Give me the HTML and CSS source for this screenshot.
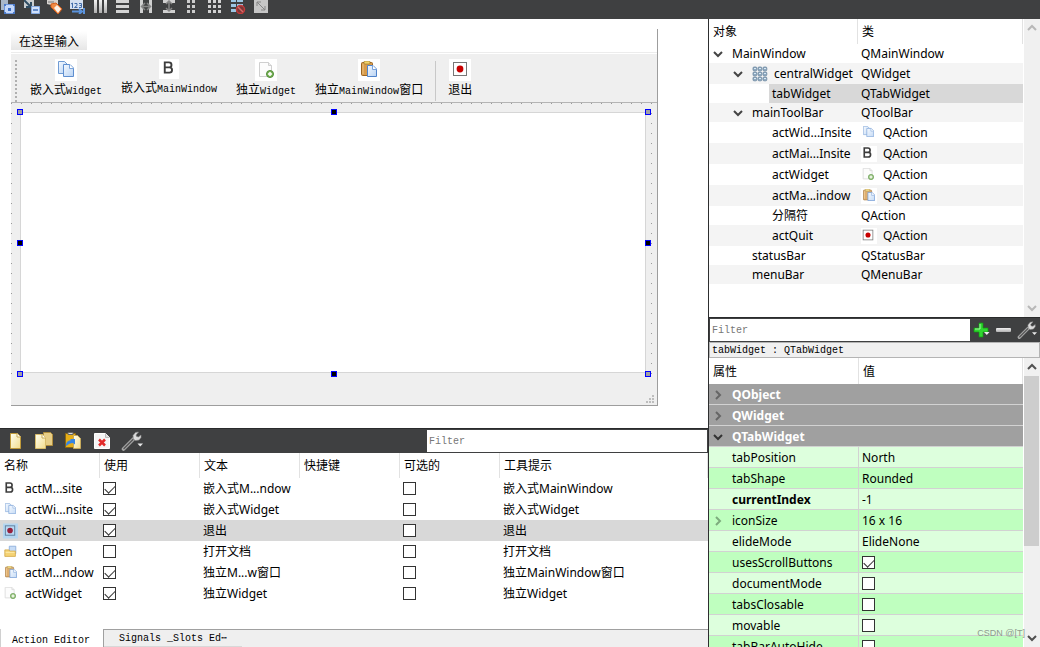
FILE: index.html
```html
<!DOCTYPE html>
<html lang="zh-CN">
<head>
<meta charset="utf-8">
<title>Qt Designer</title>
<link rel="stylesheet" href="styles.css">
</head>
<body>
<svg class="defs" aria-hidden="true">
  <defs>
    <linearGradient id="g-paper" x1="0" y1="0" x2="1" y2="1"><stop offset="0" stop-color="#fffff0"/><stop offset="1" stop-color="#f3dc8c"/></linearGradient>
    <linearGradient id="g-blue" x1="0" y1="0" x2="1" y2="1"><stop offset="0" stop-color="#f4f9ff"/><stop offset="1" stop-color="#b9d3f3"/></linearGradient>
    <linearGradient id="g-steel" x1="0" y1="0" x2="0" y2="1"><stop offset="0" stop-color="#f2f2f2"/><stop offset="1" stop-color="#b0b0b0"/></linearGradient>
    <symbol id="i-copy" viewBox="0 0 16 16">
      <path d="M.5.5h6l3 3v9h-9z" fill="url(#g-blue)" stroke="#6f9bd4"/>
      <path d="M5.500 3.500h6.500l3.500 3.500v8.500h-10z" fill="url(#g-blue)" stroke="#5f8fd0"/>
      <path d="M11.500 3.500v4h4" fill="#fff" stroke="#7ba3da"/>
    </symbol>
    <symbol id="i-bold" viewBox="0 0 16 16">
      <path d="M4 2.500h4.500a2.700 2.700 0 0 1 0 5.400H4zM4 7.900h5a2.800 2.800 0 0 1 0 5.600H4z" fill="none" stroke="#3c3c3c" stroke-width="2"/>
    </symbol>
    <symbol id="i-new" viewBox="0 0 16 16">
      <path d="M1.500.5h9l3 3v11h-12z" fill="#fcfcfc" stroke="#cfcfcf"/>
      <path d="M10.500.5v3h3" fill="#eee" stroke="#cfcfcf"/>
      <circle cx="12" cy="12" r="3.500" fill="#7cb45a" stroke="#4f8d37"/>
      <path d="M12 10v4M10 12h4" stroke="#fff" stroke-width="1.500"/>
    </symbol>
    <symbol id="i-paste" viewBox="0 0 16 16">
      <rect x=".5" y="1.500" width="11" height="13" rx="1" fill="#d79b4c" stroke="#9c6520"/>
      <path d="M2 3v10" stroke="#efc27e"/>
      <rect x="3" y="0" width="6" height="3" rx="1" fill="#f3d46d" stroke="#9c7a2a" stroke-width=".7"/>
      <path d="M6.500 4.500h5.500l3.500 3.500v7.500h-9z" fill="url(#g-blue)" stroke="#4f83cb"/>
      <path d="M11.500 4.500v4h4" fill="#fff" stroke="#7ba3da"/>
    </symbol>
    <symbol id="i-record" viewBox="0 0 16 16">
      <rect x="1.500" y="1.500" width="13" height="13" fill="#fff" stroke="#777"/>
      <circle cx="8" cy="8" r="3.400" fill="#c80000"/>
    </symbol>
    <symbol id="i-record-selected" viewBox="0 0 16 16">
      <rect width="16" height="16" fill="#b5d7f1"/>
      <rect x="2.500" y="2.500" width="10" height="10" fill="#b9d9f4" stroke="#5f7f9d"/>
      <circle cx="7.500" cy="7.500" r="3" fill="#96203c"/>
    </symbol>
    <symbol id="i-open" viewBox="0 0 16 16">
      <path d="M6.500 1.500h8v9h-8z" fill="#c7dcf6" stroke="#86a9d8"/>
      <path d="M1 6h5l1 1.500h7v6.500H1z" fill="#f5d375" stroke="#d2a84a"/>
      <path d="M2 9h11" stroke="#fff0b8"/>
    </symbol>
    <symbol id="i-grid" viewBox="0 0 16 16">
      <g fill="#8fabc2" stroke="#6d889f" stroke-width=".8">
        <rect x="1" y="1" width="3.800" height="3.800" rx="1"/><rect x="6" y="1" width="3.800" height="3.800" rx="1"/><rect x="11" y="1" width="3.800" height="3.800" rx="1"/>
        <rect x="1" y="6" width="3.800" height="3.800" rx="1"/><rect x="6" y="6" width="3.800" height="3.800" rx="1"/><rect x="11" y="6" width="3.800" height="3.800" rx="1"/>
        <rect x="1" y="11" width="3.800" height="3.800" rx="1"/><rect x="6" y="11" width="3.800" height="3.800" rx="1"/><rect x="11" y="11" width="3.800" height="3.800" rx="1"/>
      </g>
      <path d="M2 2.500h2M7 2.500h2M12 2.500h2M2 7.500h2M7 7.500h2M12 7.500h2M2 12.500h2M7 12.500h2M12 12.500h2" stroke="#d9e8f3"/>
    </symbol>
    <symbol id="i-wrench" viewBox="0 0 22 20">
      <path d="M2.500 18L12.500 8" stroke="#a6a6a6" stroke-width="3.600" stroke-linecap="round"/>
      <path d="M3 17.500L12 8.500" stroke="#555" stroke-width="1.400" stroke-linecap="round"/>
      <path d="M17.500 1l-3 .5-2.500 3 .5 3.500 2 1.500 3.500-.5 2-2.500v-2.500l-2.500 2-2-.5-.5-1.500z" fill="#dcdcdc" stroke="#8c8c8c" stroke-width=".6"/>
      <path d="M16.500 12.500H22L19.200 15.500z" fill="#e8e8e8"/>
    </symbol>
    <symbol id="i-down" viewBox="0 0 10 10"><path d="M1 3l4 4 4-4" fill="none" stroke="currentColor" stroke-width="2"/></symbol>
    <symbol id="i-up" viewBox="0 0 10 10"><path d="M1 7l4-4 4 4" fill="none" stroke="currentColor" stroke-width="2"/></symbol>
    <symbol id="i-right" viewBox="0 0 10 10"><path d="M3 1l4 4-4 4" fill="none" stroke="currentColor" stroke-width="2"/></symbol>
  </defs>
</svg>

<header class="app-toolbar">
  <button aria-label="编辑控件"><svg viewBox="0 0 16 14"><path d="M0 0h7v4H3v6H0z" fill="#a9b7c9"/><rect x="3.500" y="4.500" width="10" height="9" fill="#c4d8fa" stroke="#6f97dc"/><path d="M3 4h2v2H3zM12 4h2v2h-2zM3 12h2v2H3zM12 12h2v2h-2z" fill="#4c7bcb"/><path d="M7 8h3v3H7z" fill="#3d6fc4"/></svg></button>
  <button aria-label="编辑信号/槽"><svg viewBox="0 0 16 14"><path d="M0 0h10v8H0z" fill="#c9cdd0"/><path d="M0 0l6 6M7 2v5H2" stroke="#2f4d63" stroke-width="2" fill="none"/><path d="M7.500 6.500h8v7h-8z" fill="#cfe0fa" stroke="#86aae2"/><path d="M9 10h5" stroke="#3f6fb8" stroke-width="1.500"/></svg></button>
  <button aria-label="编辑伙伴"><svg viewBox="0 0 16 14"><path d="M0 0h11v5H4L0 4z" fill="#d6d2cf"/><path d="M1 2h6" stroke="#777"/><path d="M4 4l5-1 6 6-4 5-7-7z" fill="#f08a45" stroke="#d8601c"/><path d="M7 8l3-3 4 4-3 4z" fill="#fdf1e6"/></svg></button>
  <button aria-label="编辑Tab顺序"><svg viewBox="0 0 16 14"><path d="M0 0h13v9H0z" fill="#d5e1f1"/><path d="M1 4l1.500-1v5M4.500 3.500H7v2L4.500 7.500H7.500M9 3.500h2.500v4H9M9.500 5.500h2" stroke="#426ca9" fill="none"/><path d="M2 11.500h9M9 9l3 2.500L9 14M14 8v6" stroke="#5b93dd" stroke-width="2" fill="none"/></svg></button>
  <button aria-label="水平布局"><svg viewBox="0 0 16 14"><path d="M1 0h3v13H1zM6 0h3v13H6zM11 0h3v13h-3z" fill="url(#g-steel)"/></svg></button>
  <button aria-label="垂直布局"><svg viewBox="0 0 16 14"><path d="M0 0h13v3H0zM0 5h13v3H0zM0 10h13v3H0z" fill="#d4d4d4"/></svg></button>
  <button aria-label="水平分裂器布局"><svg viewBox="0 0 16 14"><path d="M1 0h3v13H1zM10 0h3v13h-3z" fill="#d0d0d0"/><path d="M2 6.500h10M6 3L2.500 6.500 6 10M8 3l3.500 3.500L8 10" stroke="#858585" stroke-width="1.500" fill="none"/></svg></button>
  <button aria-label="垂直分裂器布局"><svg viewBox="0 0 16 14"><path d="M1 0h12v3H1zM1 10h12v3H1z" fill="#d0d0d0"/><path d="M7 1v10M4 4l3-3 3 3M4 8l3 3 3-3" stroke="#858585" stroke-width="1.500" fill="none"/></svg></button>
  <button aria-label="窗体布局"><svg viewBox="0 0 16 14"><path d="M2 0h3v3H2zM7 0h3v3H7zM2 5h3v3H2zM7 5h3v3H7zM2 10h3v3H2zM7 10h3v3H7z" fill="#ccc"/></svg></button>
  <button aria-label="栅格布局"><svg viewBox="0 0 16 14"><path d="M0 0h3v3H0zM5 0h3v3H5zM10 0h3v3h-3zM0 5h3v3H0zM5 5h3v3H5zM10 5h3v3h-3zM0 10h3v3H0zM5 10h3v3H5zM10 10h3v3h-3z" fill="#d2d2d2"/></svg></button>
  <button aria-label="打破布局"><svg viewBox="0 0 16 14"><path d="M0 0h5v2H0zM6 0h6v2H6zM0 4h5v3H0zM6 4h6v3H6zM0 9h5v3H0z" fill="#9cc6e4"/><circle cx="9.500" cy="9.500" r="4" fill="#7a3838" stroke="#c43b3b" stroke-width="1.500"/><path d="M7 7l5 5" stroke="#d86a6a" stroke-width="1.500"/></svg></button>
  <button aria-label="调整大小"><svg viewBox="0 0 16 14"><path d="M0 0h14v13H0z" fill="#c6c6c6"/><path d="M3 2l8 8M3 6V2h4M11 6v4H7" stroke="#858585" fill="none"/></svg></button>
</header>

<div class="workspace">
  <main class="left">
    <section class="canvas">
      <div class="form">
        <nav class="form-menu"><button class="menu-item">在这里输入</button></nav>
        <div class="form-toolbar">
          <span class="grip"></span>
          <button class="tool"><svg class="tool-icon" viewBox="-3 -2 22 22"><use href="#i-copy" width="16" height="16"/></svg><span>嵌入式<span class="latin">Widget</span></span></button>
          <button class="tool"><svg class="tool-icon small" viewBox="-2 -1 20 20"><use href="#i-bold" width="15" height="15"/></svg><span>嵌入式<span class="latin">MainWindow</span></span></button>
          <button class="tool"><svg class="tool-icon" viewBox="-3 -3 22 22"><use href="#i-new" width="16" height="16"/></svg><span>独立<span class="latin">Widget</span></span></button>
          <button class="tool"><svg class="tool-icon" viewBox="-3 -2 22 22"><use href="#i-paste" width="16" height="16"/></svg><span>独立<span class="latin">MainWindow</span>窗口</span></button>
          <span class="separator"></span>
          <button class="tool"><svg class="tool-icon" viewBox="-3 -2 22 22"><use href="#i-record" width="16" height="16"/></svg><span>退出</span></button>
        </div>
        <div class="central">
          <div class="tab-widget">
            <div class="tab-page"></div>
            <i class="handle top start"></i><i class="handle top middle dark"></i><i class="handle top end"></i>
            <i class="handle center start dark"></i><i class="handle center end dark"></i>
            <i class="handle bottom start"></i><i class="handle bottom middle dark"></i><i class="handle bottom end"></i>
          </div>
        </div>
        <footer class="form-status">
          <svg class="size-grip" viewBox="0 0 8 8"><path d="M6 0h2v2H6zM3 3h2v2H3zM6 3h2v2H6zM0 6h2v2H0zM3 6h2v2H3zM6 6h2v2H6z" fill="#bdbdbd"/></svg>
        </footer>
      </div>
    </section>

    <section class="actions">
      <div class="dark-bar action-bar">
        <div class="bar-buttons">
          <button aria-label="新建"><svg viewBox="0 0 20 20"><path d="M5.500 2.500h7l3 3v12h-10z" fill="url(#g-paper)" stroke="#c09a3a"/><path d="M12 2.500v3.500h3.500" fill="#fff" stroke="#c8aa55"/></svg></button>
          <button aria-label="复制"><svg viewBox="0 0 20 20"><path d="M9.500 1.500h7l2 2v11h-9z" fill="#e6cd86" stroke="#b08d3c"/><path d="M1.500 3.500h7l3 3v11h-10z" fill="url(#g-paper)" stroke="#d8bc6a"/><path d="M8 3.500v3.500h3.500" fill="#fff" stroke="#c8aa55"/></svg></button>
          <button aria-label="粘贴"><svg viewBox="0 0 20 20"><path d="M2.500 2.500h10v14h-10z" fill="#e5ae19" stroke="#8a6712"/><path d="M5 1.500h5v2H5z" fill="#ddd" stroke="#666"/><path d="M10.500 4.500h4l3 3v10h-7z" fill="url(#g-paper)" stroke="#c7aa5c"/><path d="M3 15c0-4 2-5.500 4.500-5.500V8H12v5.500l-2-1.500c-3 0-4 1-7 3z" fill="#3584e4"/></svg></button>
          <button aria-label="删除"><svg viewBox="0 0 20 20"><path d="M2.500 2.500h11l4 4v11h-15z" fill="#f5f5f5" stroke="#fff"/><path d="M13.500 2.500v4h4" fill="#ddd" stroke="#bbb"/><path d="M7 8.500l6 6M13 8.500l-6 6" stroke="#e22a2a" stroke-width="2.500"/></svg></button>
          <button class="wide" aria-label="配置"><svg viewBox="0 0 22 20"><use href="#i-wrench" width="22" height="20"/></svg></button>
        </div>
        <input class="filter" type="text" placeholder="Filter" aria-label="筛选动作">
      </div>
      <table class="grid action-table">
        <colgroup><col class="c100"><col class="c100"><col class="c100"><col class="c100"><col class="c100"><col></colgroup>
        <thead><tr><th>名称</th><th>使用</th><th>文本</th><th>快捷键</th><th>可选的</th><th>工具提示</th></tr></thead>
        <tbody>
          <tr><td><span class="cell"><svg class="ic"><use href="#i-bold" width="13" height="13"/></svg>actM...site</span></td><td><input type="checkbox" checked aria-label="使用 actM...site"></td><td>嵌入式M...ndow</td><td></td><td><input type="checkbox" aria-label="可选的 actM...site"></td><td>嵌入式MainWindow</td></tr>
          <tr><td><span class="cell"><svg class="ic pale"><use href="#i-copy" x="2" y="1" width="11" height="11"/></svg>actWi...nsite</span></td><td><input type="checkbox" checked aria-label="使用 actWi...nsite"></td><td>嵌入式Widget</td><td></td><td><input type="checkbox" aria-label="可选的 actWi...nsite"></td><td>嵌入式Widget</td></tr>
          <tr class="selected"><td><span class="cell"><svg class="ic"><use href="#i-record-selected" width="15" height="16"/></svg>actQuit</span></td><td><input type="checkbox" checked aria-label="使用 actQuit"></td><td>退出</td><td></td><td><input type="checkbox" aria-label="可选的 actQuit"></td><td>退出</td></tr>
          <tr><td><span class="cell"><svg class="ic"><use href="#i-open" x="1" y="1" width="13" height="13"/></svg>actOpen</span></td><td><input type="checkbox" aria-label="使用 actOpen"></td><td>打开文档</td><td></td><td><input type="checkbox" aria-label="可选的 actOpen"></td><td>打开文档</td></tr>
          <tr><td><span class="cell"><svg class="ic pale"><use href="#i-paste" x="2" y="1" width="12" height="12"/></svg>actM...ndow</span></td><td><input type="checkbox" checked aria-label="使用 actM...ndow"></td><td>独立M...w窗口</td><td></td><td><input type="checkbox" aria-label="可选的 actM...ndow"></td><td>独立MainWindow窗口</td></tr>
          <tr><td><span class="cell"><svg class="ic pale"><use href="#i-new" x="1" y="1" width="12" height="12"/></svg>actWidget</span></td><td><input type="checkbox" checked aria-label="使用 actWidget"></td><td>独立Widget</td><td></td><td><input type="checkbox" aria-label="可选的 actWidget"></td><td>独立Widget</td></tr>
        </tbody>
      </table>
      <div class="dock-tabs">
        <button class="dock-tab active">Action Editor</button>
        <button class="dock-tab">Signals _Slots Ed⋯</button>
      </div>
    </section>
  </main>

  <aside class="right">
    <section class="inspector">
      <table class="grid object-table">
        <colgroup><col class="c149"><col></colgroup>
        <thead><tr><th>对象</th><th>类</th></tr></thead>
        <tbody>
          <tr><td><span class="cell l0"><svg class="arrow"><use href="#i-down" width="10" height="10"/></svg>MainWindow</span></td><td>QMainWindow</td></tr>
          <tr class="tall"><td><span class="cell l1"><svg class="arrow"><use href="#i-down" width="10" height="10"/></svg><svg class="ic grid-icon"><use href="#i-grid" width="16" height="16"/></svg>centralWidget</span></td><td>QWidget</td></tr>
          <tr class="selected"><td><span class="cell l2 picked">tabWidget</span></td><td>QTabWidget</td></tr>
          <tr><td><span class="cell l1"><svg class="arrow"><use href="#i-down" width="10" height="10"/></svg>mainToolBar</span></td><td>QToolBar</td></tr>
          <tr class="tall"><td><span class="cell l2">actWid...Insite</span></td><td><span class="cell"><svg class="ic pale"><use href="#i-copy" x="2" y="1" width="11" height="11"/></svg>QAction</span></td></tr>
          <tr class="tall"><td><span class="cell l2">actMai...Insite</span></td><td><span class="cell"><svg class="ic boxed"><use href="#i-bold" width="13" height="13"/></svg>QAction</span></td></tr>
          <tr class="tall"><td><span class="cell l2">actWidget</span></td><td><span class="cell"><svg class="ic pale"><use href="#i-new" x="1" y="1" width="12" height="12"/></svg>QAction</span></td></tr>
          <tr class="tall"><td><span class="cell l2">actMa...indow</span></td><td><span class="cell"><svg class="ic boxed"><use class="pale" href="#i-paste" x="2" y="1" width="12" height="12"/></svg>QAction</span></td></tr>
          <tr><td><span class="cell l2">分隔符</span></td><td>QAction</td></tr>
          <tr class="tall"><td><span class="cell l2">actQuit</span></td><td><span class="cell"><svg class="ic boxed"><use href="#i-record" x="1" y="1" width="12" height="12"/></svg>QAction</span></td></tr>
          <tr><td><span class="cell l1 leaf">statusBar</span></td><td>QStatusBar</td></tr>
          <tr><td><span class="cell l1 leaf">menuBar</span></td><td>QMenuBar</td></tr>
        </tbody>
      </table>
      <div class="scrollbar disabled">
        <button aria-label="向上滚动"><svg><use href="#i-up" width="10" height="10"/></svg></button>
        <button aria-label="向下滚动"><svg><use href="#i-down" width="10" height="10"/></svg></button>
      </div>
    </section>

    <div class="dark-bar property-bar">
      <input class="filter" type="text" placeholder="Filter" aria-label="筛选属性">
      <div class="bar-buttons tight">
        <button aria-label="添加"><svg viewBox="0 0 20 20"><path d="M8 3h4v5h5v4h-5v5H8v-5H3V8h5z" fill="#2fd62f" stroke="#0e9b0e" stroke-width=".7"/><path d="M9 4v5H4" stroke="#a3f5a3" fill="none"/><path d="M13 12h5.500l-2.700 3z" fill="#eee"/></svg></button>
        <button aria-label="移除"><svg viewBox="0 0 20 20"><rect x="2" y="8" width="15" height="4" rx="1" fill="url(#g-steel)"/></svg></button>
        <button aria-label="配置"><svg viewBox="0 0 22 20"><use href="#i-wrench" width="22" height="20"/></svg></button>
      </div>
    </div>
    <div class="object-label">tabWidget : QTabWidget</div>

    <section class="properties">
      <table class="grid property-table">
        <colgroup><col class="c150"><col></colgroup>
        <thead><tr><th>属性</th><th>值</th></tr></thead>
        <tbody>
          <tr class="group"><td colspan="2"><span class="cell l0"><svg class="arrow"><use href="#i-right" width="10" height="10"/></svg>QObject</span></td></tr>
          <tr class="group"><td colspan="2"><span class="cell l0"><svg class="arrow"><use href="#i-right" width="10" height="10"/></svg>QWidget</span></td></tr>
          <tr class="group open"><td colspan="2"><span class="cell l0"><svg class="arrow"><use href="#i-down" width="10" height="10"/></svg>QTabWidget</span></td></tr>
          <tr><td><span class="cell l0 leaf">tabPosition</span></td><td>North</td></tr>
          <tr><td><span class="cell l0 leaf">tabShape</span></td><td>Rounded</td></tr>
          <tr><td><span class="cell l0 leaf changed">currentIndex</span></td><td>-1</td></tr>
          <tr><td><span class="cell l0"><svg class="arrow faint"><use href="#i-right" width="10" height="10"/></svg>iconSize</span></td><td>16 x 16</td></tr>
          <tr><td><span class="cell l0 leaf">elideMode</span></td><td>ElideNone</td></tr>
          <tr><td><label class="cell l0 leaf" for="p1">usesScrollButtons</label></td><td><input id="p1" type="checkbox" checked></td></tr>
          <tr><td><label class="cell l0 leaf" for="p2">documentMode</label></td><td><input id="p2" type="checkbox"></td></tr>
          <tr><td><label class="cell l0 leaf" for="p3">tabsClosable</label></td><td><input id="p3" type="checkbox"></td></tr>
          <tr><td><label class="cell l0 leaf" for="p4">movable</label></td><td><input id="p4" type="checkbox"></td></tr>
          <tr><td><label class="cell l0 leaf" for="p5">tabBarAutoHide</label></td><td><input id="p5" type="checkbox"></td></tr>
        </tbody>
      </table>
      <div class="scrollbar">
        <button aria-label="向上滚动"><svg><use href="#i-up" width="10" height="10"/></svg></button>
        <span class="thumb"></span>
        <button aria-label="向下滚动"><svg><use href="#i-down" width="10" height="10"/></svg></button>
      </div>
      <span class="watermark">CSDN @[T]</span>
    </section>
  </aside>
</div>
</body>
</html>
```
FILE: styles.css
```css
* { box-sizing: border-box; }

body {
  margin: 0;
  height: 100vh;
  display: flex;
  flex-direction: column;
  overflow: hidden;
  background: #fff;
  color: #000;
  font: 12px/16px "Noto Sans", "Noto Sans CJK SC", sans-serif;
}

button {
  margin: 0;
  padding: 0;
  border: 0;
  background: none;
  color: inherit;
  font: inherit;
}

svg { display: block; flex: none; }
.defs { position: absolute; width: 0; height: 0; }

/* Top toolbar */
.app-toolbar {
  flex: none;
  display: flex;
  align-items: flex-start;
  gap: 7px;
  height: 19px;
  padding-left: 1px;
  background: #3f4041;
}
.app-toolbar svg { width: 16px; height: 14px; }

.workspace { flex: 1; min-height: 0; display: flex; }
.left { flex: 1; min-width: 0; display: flex; flex-direction: column; }
.right {
  flex: none;
  width: 332px;
  display: flex;
  flex-direction: column;
  border-left: 1px solid #2d2e2f;
}

/* Form being designed */
.canvas { flex: 1; min-height: 0; padding: 10px 50px 22px 11px; display: flex; }
.form {
  flex: 1;
  display: flex;
  flex-direction: column;
  border-right: 1px solid #9d9d9d;
  border-bottom: 1px solid #9d9d9d;
  background: #efefef;
}
.form-menu {
  display: flex;
  padding: 2px 0;
  background: #fff;
  border-bottom: 1px solid #ececec;
}
.menu-item {
  height: 19px;
  padding: 2px 8px 0;
  background: linear-gradient(#fff, #e6e6e6);
}
.form-toolbar {
  display: flex;
  align-items: flex-start;
  gap: 19px;
  height: 50px;
  padding: 5px 4px 0;
  border-top: 1px solid #fff;
  border-bottom: 1px solid #b4b4b4;
}
.grip {
  align-self: center;
  width: 2px;
  height: 42px;
  margin-right: -6px;
  background: repeating-linear-gradient(#b0b0b0 0 2px, transparent 2px 4px);
}
.tool {
  display: flex;
  flex-direction: column;
  align-items: center;
  gap: 1px;
  white-space: nowrap;
}
.tool-icon { width: 22px; height: 22px; background: #fff; }
.tool-icon.small { width: 20px; height: 20px; }
.latin { font: 10px/16px "Liberation Mono", monospace; }
.separator {
  align-self: center;
  width: 1px;
  height: 40px;
  margin: 0 -7px;
  background: #c8c8c8;
}
.central {
  flex: 1;
  display: flex;
  padding: 9px;
  padding-bottom: 0;
  background: linear-gradient(90deg, #efefef 9px, transparent 0) 1px 0 / 10px 10px,
              linear-gradient(#999 1px, #efefef 0) 0 0 / 10px 10px;
}
.tab-widget { position: relative; flex: 1; padding: 0 2px 1px 0; display: flex; background: #efefef; }
.tab-page { flex: 1; border: 1px solid #d6d6d6; background: #fff; }
.handle {
  position: absolute;
  width: 6px;
  height: 6px;
  border: 1px solid #00f;
  background: #a0a0a4;
}
.handle.dark { background: #000; }
.handle.top { top: -3px; }
.handle.center { top: calc(50% - 3px); }
.handle.bottom { bottom: -3px; }
.handle.start { left: -3px; }
.handle.middle { left: calc(50% - 3px); }
.handle.end { right: -3px; }
.form-status { display: flex; align-items: flex-end; justify-content: flex-end; height: 31px; padding: 2px 3px; }
.size-grip { width: 8px; height: 8px; }

/* Dark bars with filter boxes */
.dark-bar {
  flex: none;
  display: flex;
  height: 25px;
  padding: 1px 0;
  border-top: 1px solid #2a2b2c;
  background: #3f4041;
}
.action-bar { padding-right: 1px; }
.bar-buttons { flex: 1; display: flex; align-items: center; gap: 9px; padding-left: 5px; }
.bar-buttons svg { width: 20px; height: 20px; }
.bar-buttons .wide svg { width: 22px; }
.bar-buttons.tight { flex: none; gap: 3px; padding: 0 3px 0 1px; }
.filter {
  width: 280px;
  padding: 2px 2px 0;
  border: 0;
  background: #fff;
  font: 10px/16px "Liberation Mono", monospace;
}
.filter::placeholder { color: #777; }
.property-bar .filter { flex: 1; width: 0; margin-left: 1px; }

/* Tables */
.grid {
  table-layout: fixed;
  width: 100%;
  border-spacing: 0;
}
.grid th {
  height: 25px;
  padding: 0 4px;
  border-right: 1px solid #e2e2e2;
  text-align: left;
  font-weight: 400;
}
.grid td { height: 21px; padding: 0 3px; white-space: nowrap; }
.grid td:first-child { padding: 0; }
.c100 { width: 100px; }
.c149 { width: 149px; }
.c150 { width: 150px; }
.cell { display: flex; align-items: center; gap: 6px; }
.ic { width: 16px; height: 16px; }
.ic.boxed { background: #fff; }
.pale { opacity: .8; }
.arrow { width: 10px; height: 10px; color: #444; }

input[type="checkbox"] {
  appearance: none;
  display: flex;
  align-items: flex-start;
  justify-content: center;
  width: 13px;
  height: 13px;
  margin: 0;
  padding-top: 2px;
  border: 1px solid #333;
  background: #fff;
}
input[type="checkbox"]:checked::after {
  content: "";
  width: 9px;
  height: 5px;
  border-left: 1px solid #333;
  border-bottom: 1px solid #333;
  transform: rotate(-45deg);
}

/* Action editor */
.actions { flex: none; }
.action-table .cell { padding-left: 3px; }
.action-table .selected { background: #d8d8d8; }
.dock-tabs {
  display: flex;
  margin-top: 25px;
  background: #efefef;
  box-shadow: inset 0 1px #a0a0a0;
}
.dock-tab {
  height: 18px;
  padding: 1px 15px 0;
  border-top: 1px solid #a0a0a0;
  border-bottom: 1px solid #d8d8d8;
  font: 10px/16px "Liberation Mono", monospace;
}
.dock-tab.active {
  padding: 4px 13px 0 11px;
  border: 0;
  border-left: 1px solid #d0d0d0;
  border-right: 1px solid #a0a0a0;
  background: #fff;
}

/* Object inspector */
.inspector { flex: none; display: flex; height: 298px; }
.inspector .grid, .properties .grid { flex: 1; width: 0; align-self: flex-start; }
.object-table td { height: 19px; }
.object-table .tall td { height: 21px; }
.object-table tbody tr:nth-child(even) { background: #f4f4f4; }
.object-table .selected td:last-child, .picked { background: #d8d8d8; }
.l0 { padding-left: 4px; gap: 9px; }
.l0.leaf { padding-left: 23px; }
.l1 { padding-left: 24px; gap: 9px; }
.l1.leaf { padding-left: 43px; }
.grid-icon { margin-right: -3px; }
.l2 { padding-left: 63px; }
.picked { margin-left: 60px; padding-left: 3px; line-height: 19px; }

.scrollbar {
  flex: none;
  width: 17px;
  display: flex;
  flex-direction: column;
  justify-content: space-between;
  background: #f0f0f0;
  border-left: 1px solid #fff;
}
.scrollbar button { height: 18px; padding-left: 3px; color: #505050; }
.scrollbar.disabled button { color: #b8b8b8; }
.scrollbar svg { width: 10px; height: 10px; }
.scrollbar .thumb { height: 170px; margin-right: 1px; margin-bottom: auto; background: #cdcdcd; }

/* Property editor */
.object-label {
  flex: none;
  height: 16px;
  padding: 1px 2px 0;
  border: 1px solid #b4b4b4;
  background: #f0f0f0;
  font: 10px/14px "Liberation Mono", monospace;
}
.properties { position: relative; flex: 1; min-height: 0; display: flex; overflow: hidden; }
.property-table th { height: 26px; padding-top: 2px; }
.property-table td { padding-top: 1px; border-bottom: 1px solid #d2d2d2; }
.property-table td:first-child { padding-top: 1px; border-right: 1px solid #d2d2d2; }
.property-table tr:nth-child(even) td { background: #ddffdd; }
.property-table tr:nth-child(odd) td { background: #bfffbf; }
.property-table tr.group td {
  border-right: 0;
  background: #a0a0a0;
  color: #fff;
  font-weight: 700;
}
.group .arrow { color: #666; }
.group.open .arrow { color: #333; }
.arrow.faint { color: #7dac7d; }
.changed { font-weight: 700; }
.watermark {
  position: absolute;
  right: 15px;
  bottom: 6px;
  color: #8d9a8d;
  font: 9px/16px "Liberation Sans", sans-serif;
}
```
